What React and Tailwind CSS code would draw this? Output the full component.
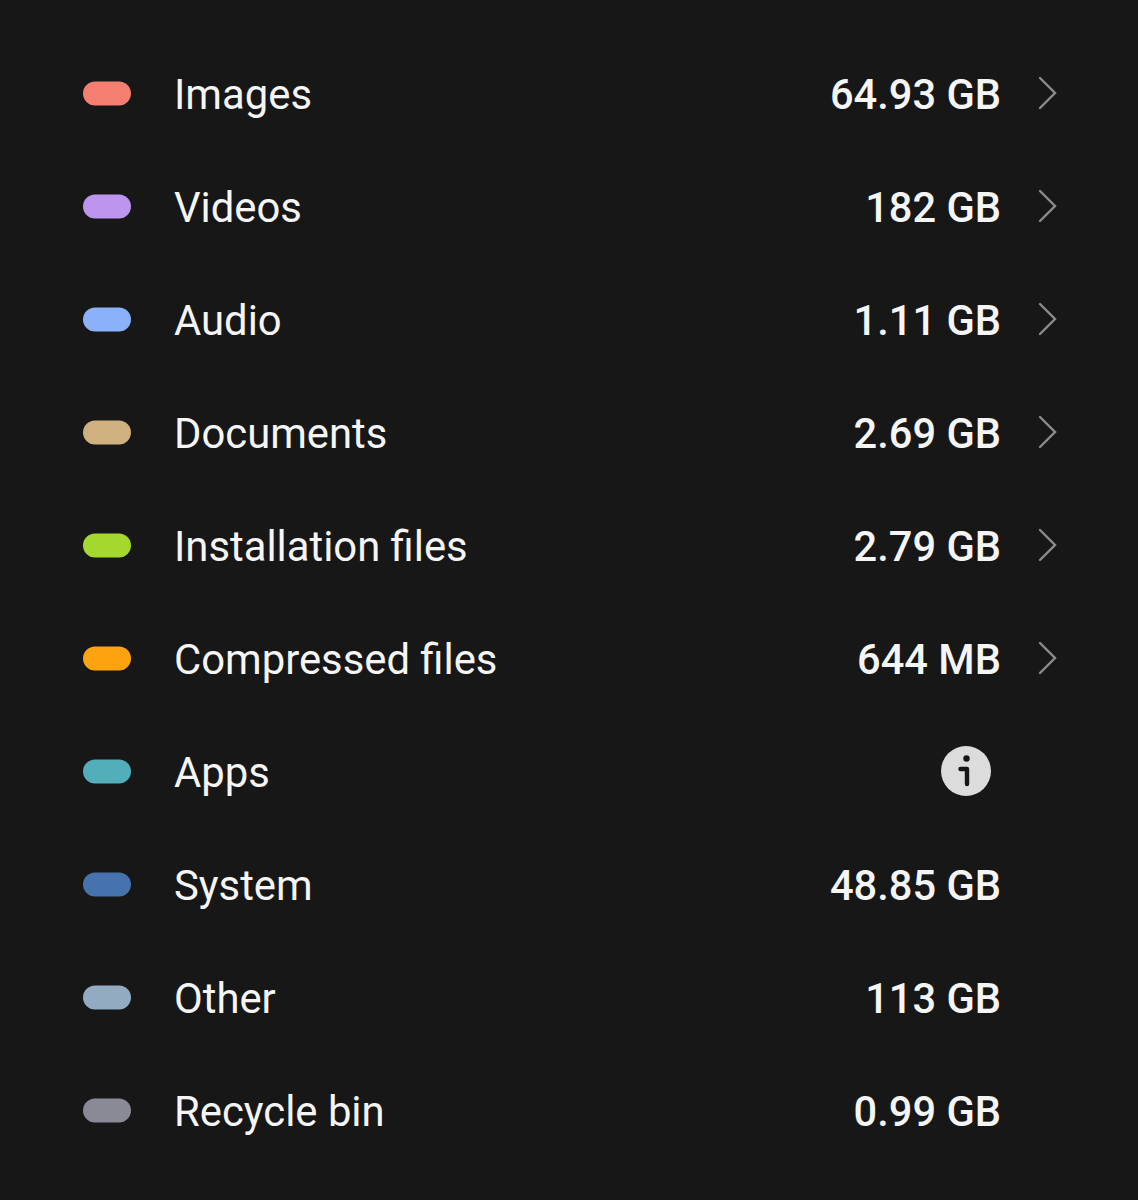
const rows = [
  { name: "Images", value: "64.93 GB", color: "bg-[#f47f71]", chevron: true },
  { name: "Videos", value: "182 GB", color: "bg-[#bd94ee]", chevron: true },
  { name: "Audio", value: "1.11 GB", color: "bg-[#8cb1fb]", chevron: true },
  { name: "Documents", value: "2.69 GB", color: "bg-[#cfb180]", chevron: true },
  { name: "Installation files", value: "2.79 GB", color: "bg-[#a4d82f]", chevron: true },
  { name: "Compressed files", value: "644 MB", color: "bg-[#fca30f]", chevron: true },
  { name: "Apps", info: true, color: "bg-[#52aeb8]" },
  { name: "System", value: "48.85 GB", color: "bg-[#4673ad]" },
  { name: "Other", value: "113 GB", color: "bg-[#92abc0]" },
  { name: "Recycle bin", value: "0.99 GB", color: "bg-[#8a8a96]" },
];

function Chevron() {
  return (
    <svg width="20" height="34" viewBox="0 0 20 34" fill="none" className="block">
      <path d="M2 2 L17 17 L2 32" stroke="#8c8c8c" strokeWidth="2.4" strokeLinecap="round" strokeLinejoin="miter" />
    </svg>
  );
}

function Info() {
  return (
    <svg width="50" height="50" viewBox="0 0 50 50" className="block">
      <circle cx="25" cy="25" r="25" fill="#dcdcdc" />
      <circle cx="25.5" cy="12.5" r="3.2" fill="#161616" />
      <path d="M19.5 23 H26 V38" fill="none" stroke="#161616" strokeWidth="4.4" strokeLinecap="round" strokeLinejoin="round" />
    </svg>
  );
}

export default function App() {
  return (
    <div className="w-[1138px] h-[1200px] bg-[#171717] pt-[38px] pl-[83px] pr-[80px] font-['Roboto',sans-serif] overflow-hidden">
      {rows.map((r) => (
        <div key={r.name} className="h-[113px] flex items-center">
          <div className={`w-[48px] h-[24px] rounded-full shrink-0 ${r.color} -translate-y-[1.5px]`} />
          <div className="ml-[44px] -translate-x-px flex-1 text-[41.8px] leading-none text-[#f5f5f5]">{r.name}</div>
          {r.value && <div className="text-[41.6px] leading-none font-medium text-[#f5f5f5]">{r.value}</div>}
          {r.info && <div className="mr-[10px] -translate-y-[2px]"><Info /></div>}
          <div className="w-[57px] shrink-0 flex justify-end -translate-y-[2px]">
            {r.chevron && <Chevron />}
          </div>
        </div>
      ))}
    </div>
  );
}
